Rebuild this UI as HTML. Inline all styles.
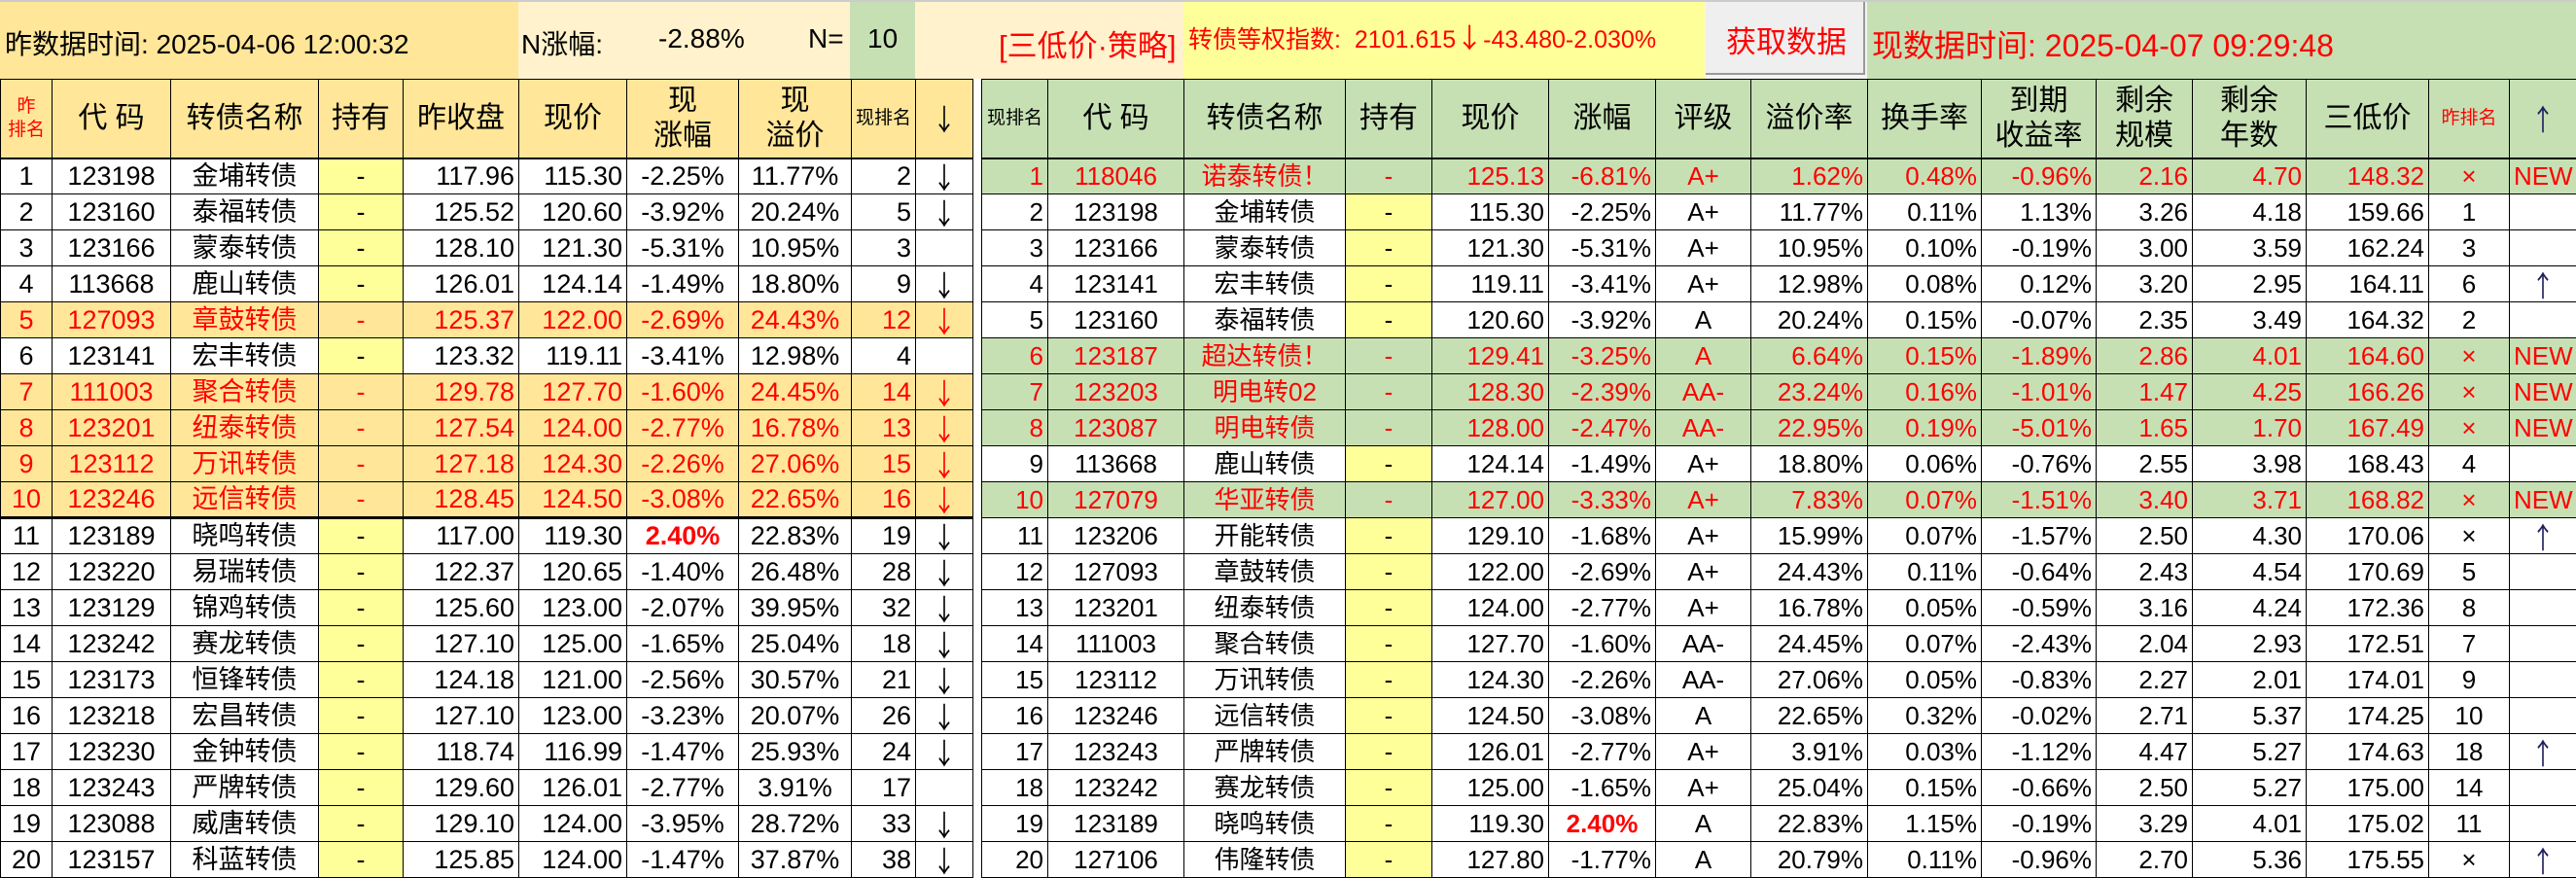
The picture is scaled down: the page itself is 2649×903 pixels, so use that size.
<!DOCTYPE html>
<html><head><meta charset="utf-8">
<style>
*{margin:0;padding:0;box-sizing:border-box}
body{width:2649px;height:902px;overflow:hidden;background:#fff;font-family:"Liberation Sans Narrow","Liberation Sans","Noto Sans CJK SC",sans-serif;color:#000;position:relative}
.a{position:absolute;white-space:nowrap}
table{position:absolute;border-collapse:collapse;table-layout:fixed;top:81px}
td{border:1px solid #000;height:37px;font-size:27px;line-height:35px;text-align:center;overflow:hidden;white-space:nowrap;padding:0 4px}
thead td{height:81px;font-size:30px;line-height:36px}
thead tr td{border-bottom:2px solid #000}
#L thead td{background:#ffe699}
#R thead td{background:#c6e0b4}
#R td{font-family:"Liberation Sans","Noto Sans CJK SC",sans-serif;font-size:26px}
#R thead td{font-size:30px}
.r{text-align:right}
.y{background:#ffff99}
tr.h td{background:#ffe699;color:#f00}
tr.g td{background:#c6e0b4;color:#f00}
tr.t td{border-bottom:3px solid #000}
.sm{font-size:19px!important;line-height:24px!important}
.red{color:#f00}
.b{color:#f00!important;font-weight:bold}
.up{color:#202060}
.ar{font-family:"Noto Sans CJK SC",sans-serif!important;font-size:30px!important;display:inline-block;height:34px;line-height:34px;vertical-align:top;overflow:hidden;transform:scaleX(0.8)}
</style></head><body>
<div class="a" style="left:0;top:0;width:2649px;height:2px;background:#ccc"></div>
<div class="a" style="left:0;top:2px;width:533px;height:79px;background:#ffe699"></div>
<div class="a" style="left:533px;top:2px;width:341px;height:79px;background:#fff2cc"></div>
<div class="a" style="left:874px;top:2px;width:67px;height:79px;background:#c6e0b4"></div>
<div class="a" style="left:941px;top:2px;width:276px;height:79px;background:#fff2cc"></div>
<div class="a" style="left:1217px;top:2px;width:536px;height:79px;background:#ffff99"></div>
<div class="a" style="left:1753px;top:2px;width:167px;height:79px;background:#f4f4f4"></div>
<div class="a" style="left:1754px;top:2px;width:164px;height:75px;background:#efefef;border-right:2px solid #999;border-bottom:2px solid #999"></div>
<div class="a" style="left:1920px;top:2px;width:729px;height:79px;background:#c6e0b4"></div>
<div class="a" style="left:5px;top:24px;font-size:28px">昨数据时间: 2025-04-06 12:00:32</div>
<div class="a" style="left:536px;top:24px;font-size:28px">N涨幅:</div>
<div class="a" style="left:677px;top:24px;font-size:28px">-2.88%</div>
<div class="a" style="left:831px;top:24px;font-size:28px">N=</div>
<div class="a" style="left:892px;top:24px;font-size:28px">10</div>
<div class="a red" style="left:1027px;top:22px;font-size:31px">[三低价·策略]</div>
<div class="a red" style="left:1222px;top:24px;font-size:25px;line-height:32px">转债等权指数:&nbsp; 2101.615<span style="font-family:'Noto Sans CJK SC',sans-serif;font-size:28px;line-height:28px">↓</span>-43.480-2.030%</div>
<div class="a red" style="left:1775px;top:18px;font-size:31px">获取数据</div>
<div class="a red" style="left:1925px;top:22px;font-size:32px">现数据时间: 2025-04-07 09:29:48</div>

<table id="L" style="left:0;width:1000px">
<colgroup><col style="width:53px"><col style="width:122px"><col style="width:152px"><col style="width:87px"><col style="width:119px"><col style="width:111px"><col style="width:115px"><col style="width:116px"><col style="width:66px"><col style="width:59px"></colgroup>
<thead><tr><td class="sm red">昨<br>排名</td><td>代 码</td><td>转债名称</td><td>持有</td><td>昨收盘</td><td>现价</td><td>现<br>涨幅</td><td>现<br>溢价</td><td class="sm">现排名</td><td><span class="ar">↓</span></td></tr></thead>
<tbody>
<tr><td>1</td><td>123198</td><td>金埔转债</td><td class="y">-</td><td class="r">117.96</td><td class="r">115.30</td><td>-2.25%</td><td>11.77%</td><td class="r">2</td><td><span class="ar">↓</span></td></tr>
<tr><td>2</td><td>123160</td><td>泰福转债</td><td class="y">-</td><td class="r">125.52</td><td class="r">120.60</td><td>-3.92%</td><td>20.24%</td><td class="r">5</td><td><span class="ar">↓</span></td></tr>
<tr><td>3</td><td>123166</td><td>蒙泰转债</td><td class="y">-</td><td class="r">128.10</td><td class="r">121.30</td><td>-5.31%</td><td>10.95%</td><td class="r">3</td><td></td></tr>
<tr><td>4</td><td>113668</td><td>鹿山转债</td><td class="y">-</td><td class="r">126.01</td><td class="r">124.14</td><td>-1.49%</td><td>18.80%</td><td class="r">9</td><td><span class="ar">↓</span></td></tr>
<tr class="h"><td>5</td><td>127093</td><td>章鼓转债</td><td>-</td><td class="r">125.37</td><td class="r">122.00</td><td>-2.69%</td><td>24.43%</td><td class="r">12</td><td><span class="ar">↓</span></td></tr>
<tr><td>6</td><td>123141</td><td>宏丰转债</td><td class="y">-</td><td class="r">123.32</td><td class="r">119.11</td><td>-3.41%</td><td>12.98%</td><td class="r">4</td><td></td></tr>
<tr class="h"><td>7</td><td>111003</td><td>聚合转债</td><td>-</td><td class="r">129.78</td><td class="r">127.70</td><td>-1.60%</td><td>24.45%</td><td class="r">14</td><td><span class="ar">↓</span></td></tr>
<tr class="h"><td>8</td><td>123201</td><td>纽泰转债</td><td>-</td><td class="r">127.54</td><td class="r">124.00</td><td>-2.77%</td><td>16.78%</td><td class="r">13</td><td><span class="ar">↓</span></td></tr>
<tr class="h"><td>9</td><td>123112</td><td>万讯转债</td><td>-</td><td class="r">127.18</td><td class="r">124.30</td><td>-2.26%</td><td>27.06%</td><td class="r">15</td><td><span class="ar">↓</span></td></tr>
<tr class="h t"><td>10</td><td>123246</td><td>远信转债</td><td>-</td><td class="r">128.45</td><td class="r">124.50</td><td>-3.08%</td><td>22.65%</td><td class="r">16</td><td><span class="ar">↓</span></td></tr>
<tr><td>11</td><td>123189</td><td>晓鸣转债</td><td class="y">-</td><td class="r">117.00</td><td class="r">119.30</td><td class="b">2.40%</td><td>22.83%</td><td class="r">19</td><td><span class="ar">↓</span></td></tr>
<tr><td>12</td><td>123220</td><td>易瑞转债</td><td class="y">-</td><td class="r">122.37</td><td class="r">120.65</td><td>-1.40%</td><td>26.48%</td><td class="r">28</td><td><span class="ar">↓</span></td></tr>
<tr><td>13</td><td>123129</td><td>锦鸡转债</td><td class="y">-</td><td class="r">125.60</td><td class="r">123.00</td><td>-2.07%</td><td>39.95%</td><td class="r">32</td><td><span class="ar">↓</span></td></tr>
<tr><td>14</td><td>123242</td><td>赛龙转债</td><td class="y">-</td><td class="r">127.10</td><td class="r">125.00</td><td>-1.65%</td><td>25.04%</td><td class="r">18</td><td><span class="ar">↓</span></td></tr>
<tr><td>15</td><td>123173</td><td>恒锋转债</td><td class="y">-</td><td class="r">124.18</td><td class="r">121.00</td><td>-2.56%</td><td>30.57%</td><td class="r">21</td><td><span class="ar">↓</span></td></tr>
<tr><td>16</td><td>123218</td><td>宏昌转债</td><td class="y">-</td><td class="r">127.10</td><td class="r">123.00</td><td>-3.23%</td><td>20.07%</td><td class="r">26</td><td><span class="ar">↓</span></td></tr>
<tr><td>17</td><td>123230</td><td>金钟转债</td><td class="y">-</td><td class="r">118.74</td><td class="r">116.99</td><td>-1.47%</td><td>25.93%</td><td class="r">24</td><td><span class="ar">↓</span></td></tr>
<tr><td>18</td><td>123243</td><td>严牌转债</td><td class="y">-</td><td class="r">129.60</td><td class="r">126.01</td><td>-2.77%</td><td>3.91%</td><td class="r">17</td><td></td></tr>
<tr><td>19</td><td>123088</td><td>威唐转债</td><td class="y">-</td><td class="r">129.10</td><td class="r">124.00</td><td>-3.95%</td><td>28.72%</td><td class="r">33</td><td><span class="ar">↓</span></td></tr>
<tr><td>20</td><td>123157</td><td>科蓝转债</td><td class="y">-</td><td class="r">125.85</td><td class="r">124.00</td><td>-1.47%</td><td>37.87%</td><td class="r">38</td><td><span class="ar">↓</span></td></tr>
</tbody></table>

<table id="R" style="left:1009px;width:1640px">
<colgroup><col style="width:68px"><col style="width:140px"><col style="width:166px"><col style="width:89px"><col style="width:120px"><col style="width:110px"><col style="width:98px"><col style="width:120px"><col style="width:117px"><col style="width:118px"><col style="width:99px"><col style="width:117px"><col style="width:126px"><col style="width:83px"><col style="width:69px"></colgroup>
<thead><tr><td class="sm" style="padding:0">现排名</td><td>代 码</td><td>转债名称</td><td>持有</td><td>现价</td><td>涨幅</td><td>评级</td><td>溢价率</td><td>换手率</td><td>到期<br>收益率</td><td>剩余<br>规模</td><td>剩余<br>年数</td><td>三低价</td><td class="sm red">昨排名</td><td class="up"><span class="ar">↑</span></td></tr></thead>
<tbody>
<tr class="g"><td class="r">1</td><td>118046</td><td>诺泰转债！</td><td>-</td><td class="r">125.13</td><td class="r">-6.81%</td><td>A+</td><td class="r">1.62%</td><td class="r">0.48%</td><td class="r">-0.96%</td><td class="r">2.16</td><td class="r">4.70</td><td class="r">148.32</td><td>×</td><td>NEW</td></tr>
<tr><td class="r">2</td><td>123198</td><td>金埔转债</td><td class="y">-</td><td class="r">115.30</td><td class="r">-2.25%</td><td>A+</td><td class="r">11.77%</td><td class="r">0.11%</td><td class="r">1.13%</td><td class="r">3.26</td><td class="r">4.18</td><td class="r">159.66</td><td>1</td><td></td></tr>
<tr><td class="r">3</td><td>123166</td><td>蒙泰转债</td><td class="y">-</td><td class="r">121.30</td><td class="r">-5.31%</td><td>A+</td><td class="r">10.95%</td><td class="r">0.10%</td><td class="r">-0.19%</td><td class="r">3.00</td><td class="r">3.59</td><td class="r">162.24</td><td>3</td><td></td></tr>
<tr><td class="r">4</td><td>123141</td><td>宏丰转债</td><td class="y">-</td><td class="r">119.11</td><td class="r">-3.41%</td><td>A+</td><td class="r">12.98%</td><td class="r">0.08%</td><td class="r">0.12%</td><td class="r">3.20</td><td class="r">2.95</td><td class="r">164.11</td><td>6</td><td class="up"><span class="ar">↑</span></td></tr>
<tr><td class="r">5</td><td>123160</td><td>泰福转债</td><td class="y">-</td><td class="r">120.60</td><td class="r">-3.92%</td><td>A</td><td class="r">20.24%</td><td class="r">0.15%</td><td class="r">-0.07%</td><td class="r">2.35</td><td class="r">3.49</td><td class="r">164.32</td><td>2</td><td></td></tr>
<tr class="g"><td class="r">6</td><td>123187</td><td>超达转债！</td><td>-</td><td class="r">129.41</td><td class="r">-3.25%</td><td>A</td><td class="r">6.64%</td><td class="r">0.15%</td><td class="r">-1.89%</td><td class="r">2.86</td><td class="r">4.01</td><td class="r">164.60</td><td>×</td><td>NEW</td></tr>
<tr class="g"><td class="r">7</td><td>123203</td><td>明电转02</td><td>-</td><td class="r">128.30</td><td class="r">-2.39%</td><td>AA-</td><td class="r">23.24%</td><td class="r">0.16%</td><td class="r">-1.01%</td><td class="r">1.47</td><td class="r">4.25</td><td class="r">166.26</td><td>×</td><td>NEW</td></tr>
<tr class="g"><td class="r">8</td><td>123087</td><td>明电转债</td><td>-</td><td class="r">128.00</td><td class="r">-2.47%</td><td>AA-</td><td class="r">22.95%</td><td class="r">0.19%</td><td class="r">-5.01%</td><td class="r">1.65</td><td class="r">1.70</td><td class="r">167.49</td><td>×</td><td>NEW</td></tr>
<tr><td class="r">9</td><td>113668</td><td>鹿山转债</td><td class="y">-</td><td class="r">124.14</td><td class="r">-1.49%</td><td>A+</td><td class="r">18.80%</td><td class="r">0.06%</td><td class="r">-0.76%</td><td class="r">2.55</td><td class="r">3.98</td><td class="r">168.43</td><td>4</td><td></td></tr>
<tr class="g"><td class="r">10</td><td>127079</td><td>华亚转债</td><td>-</td><td class="r">127.00</td><td class="r">-3.33%</td><td>A+</td><td class="r">7.83%</td><td class="r">0.07%</td><td class="r">-1.51%</td><td class="r">3.40</td><td class="r">3.71</td><td class="r">168.82</td><td>×</td><td>NEW</td></tr>
<tr><td class="r">11</td><td>123206</td><td>开能转债</td><td class="y">-</td><td class="r">129.10</td><td class="r">-1.68%</td><td>A+</td><td class="r">15.99%</td><td class="r">0.07%</td><td class="r">-1.57%</td><td class="r">2.50</td><td class="r">4.30</td><td class="r">170.06</td><td>×</td><td class="up"><span class="ar">↑</span></td></tr>
<tr><td class="r">12</td><td>127093</td><td>章鼓转债</td><td class="y">-</td><td class="r">122.00</td><td class="r">-2.69%</td><td>A+</td><td class="r">24.43%</td><td class="r">0.11%</td><td class="r">-0.64%</td><td class="r">2.43</td><td class="r">4.54</td><td class="r">170.69</td><td>5</td><td></td></tr>
<tr><td class="r">13</td><td>123201</td><td>纽泰转债</td><td class="y">-</td><td class="r">124.00</td><td class="r">-2.77%</td><td>A+</td><td class="r">16.78%</td><td class="r">0.05%</td><td class="r">-0.59%</td><td class="r">3.16</td><td class="r">4.24</td><td class="r">172.36</td><td>8</td><td></td></tr>
<tr><td class="r">14</td><td>111003</td><td>聚合转债</td><td class="y">-</td><td class="r">127.70</td><td class="r">-1.60%</td><td>AA-</td><td class="r">24.45%</td><td class="r">0.07%</td><td class="r">-2.43%</td><td class="r">2.04</td><td class="r">2.93</td><td class="r">172.51</td><td>7</td><td></td></tr>
<tr><td class="r">15</td><td>123112</td><td>万讯转债</td><td class="y">-</td><td class="r">124.30</td><td class="r">-2.26%</td><td>AA-</td><td class="r">27.06%</td><td class="r">0.05%</td><td class="r">-0.83%</td><td class="r">2.27</td><td class="r">2.01</td><td class="r">174.01</td><td>9</td><td></td></tr>
<tr><td class="r">16</td><td>123246</td><td>远信转债</td><td class="y">-</td><td class="r">124.50</td><td class="r">-3.08%</td><td>A</td><td class="r">22.65%</td><td class="r">0.32%</td><td class="r">-0.02%</td><td class="r">2.71</td><td class="r">5.37</td><td class="r">174.25</td><td>10</td><td></td></tr>
<tr><td class="r">17</td><td>123243</td><td>严牌转债</td><td class="y">-</td><td class="r">126.01</td><td class="r">-2.77%</td><td>A+</td><td class="r">3.91%</td><td class="r">0.03%</td><td class="r">-1.12%</td><td class="r">4.47</td><td class="r">5.27</td><td class="r">174.63</td><td>18</td><td class="up"><span class="ar">↑</span></td></tr>
<tr><td class="r">18</td><td>123242</td><td>赛龙转债</td><td class="y">-</td><td class="r">125.00</td><td class="r">-1.65%</td><td>A+</td><td class="r">25.04%</td><td class="r">0.15%</td><td class="r">-0.66%</td><td class="r">2.50</td><td class="r">5.27</td><td class="r">175.00</td><td>14</td><td></td></tr>
<tr><td class="r">19</td><td>123189</td><td>晓鸣转债</td><td class="y">-</td><td class="r">119.30</td><td class="b">2.40%</td><td>A</td><td class="r">22.83%</td><td class="r">1.15%</td><td class="r">-0.19%</td><td class="r">3.29</td><td class="r">4.01</td><td class="r">175.02</td><td>11</td><td></td></tr>
<tr><td class="r">20</td><td>127106</td><td>伟隆转债</td><td class="y">-</td><td class="r">127.80</td><td class="r">-1.77%</td><td>A</td><td class="r">20.79%</td><td class="r">0.11%</td><td class="r">-0.96%</td><td class="r">2.70</td><td class="r">5.36</td><td class="r">175.55</td><td>×</td><td class="up"><span class="ar">↑</span></td></tr>
</tbody></table>
</body></html>
